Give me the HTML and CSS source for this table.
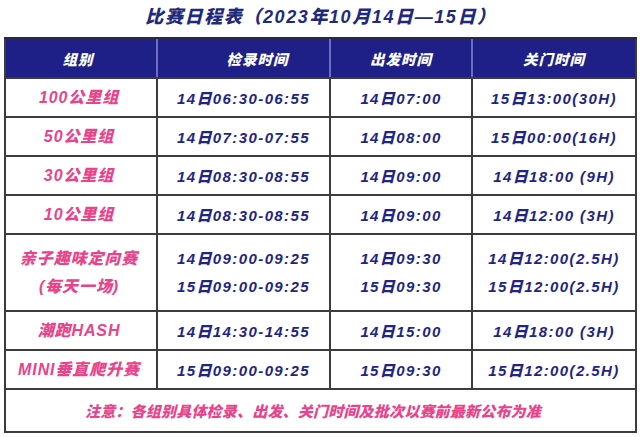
FILE: index.html
```html
<!DOCTYPE html>
<html lang="zh-CN">
<head>
<meta charset="utf-8">
<link rel="stylesheet" href="styles.css">
</head>
<body>
<div class="title">比赛日程表（2023年10月14日—15日）</div>
<table class="sched">
  <colgroup>
    <col class="c1"><col class="c2"><col class="c3"><col class="c4">
  </colgroup>
  <thead>
    <tr><th>组别</th><th class="shift">检录时间</th><th>出发时间</th><th>关门时间</th></tr>
  </thead>
  <tbody>
    <tr><td class="grp">100公里组</td><td>14日06:30-06:55</td><td>14日07:00</td><td>15日13:00(30H)</td></tr>
    <tr><td class="grp">50公里组</td><td>14日07:30-07:55</td><td>14日08:00</td><td>15日00:00(16H)</td></tr>
    <tr><td class="grp">30公里组</td><td>14日08:30-08:55</td><td>14日09:00</td><td>14日18:00 (9H)</td></tr>
    <tr><td class="grp">10公里组</td><td>14日08:30-08:55</td><td>14日09:00</td><td>14日12:00 (3H)</td></tr>
    <tr class="tall">
      <td class="grp">亲子趣味定向赛<br>(每天一场)</td>
      <td><div class="ln">14日09:00-09:25</div><div class="ln">15日09:00-09:25</div></td>
      <td><div class="ln">14日09:30</div><div class="ln">15日09:30</div></td>
      <td><div class="ln">14日12:00(2.5H)</div><div class="ln">15日12:00(2.5H)</div></td>
    </tr>
    <tr><td class="grp">潮跑HASH</td><td>14日14:30-14:55</td><td>14日15:00</td><td>14日18:00 (3H)</td></tr>
    <tr><td class="grp">MINI垂直爬升赛</td><td>15日09:00-09:25</td><td>15日09:30</td><td>15日12:00(2.5H)</td></tr>
    <tr class="note"><td colspan="4">注意：各组别具体检录、出发、关门时间及批次以赛前最新公布为准</td></tr>
  </tbody>
</table>
</body>
</html>
```
FILE: styles.css
```css
html, body {
  margin: 0;
  padding: 0;
  background: #ffffff;
}
body {
  width: 640px;
  height: 437px;
  overflow: hidden;
  font-family: "Liberation Sans", "Noto Sans CJK SC", sans-serif;
  font-weight: 900;
  font-style: italic;
}
.title {
  height: 37px;
  line-height: 34px;
  text-align: center;
  font-size: 18px;
  color: #1f2a7c;
  letter-spacing: 1.6px;
  padding-left: 2px;
}
.sched {
  margin-left: 4px;
  width: 631px;
  border-collapse: collapse;
  table-layout: fixed;
  border: 2px solid #3c3c3c;
}
.c1 { width: 152px; }
.c2 { width: 173px; }
.c3 { width: 142px; }
.c4 { width: 164px; }
.sched th {
  background: #1e1f87;
  color: #ffffff;
  height: 38px;
  padding: 0;
  font-size: 14.5px;
  font-weight: 900;
  letter-spacing: 1px;
  border-left: 2px solid #6d6ec2;
  border-bottom: 2px solid #3c3c3c;
  border-top: 2px solid #2a2a3a;
}
.sched th:first-child {
  border-left: 2px solid #3c3c3c;
  padding-right: 6px;
}
.sched th.shift { padding-left: 28px; }
.sched td {
  height: 37px;
  padding: 0;
  text-align: center;
  border: 2px solid #3c3c3c;
  color: #1e2585;
  font-size: 15px;
  letter-spacing: 1.4px;
}
.sched td.grp {
  color: #e8438b;
  font-size: 16px;
  letter-spacing: 0.9px;
  line-height: 28px;
  padding-right: 4px;
}
.sched tr.tall td { height: 75px; }
.ln { line-height: 28px; }
.sched tr.note td {
  height: 41px;
  color: #e8438b;
  font-size: 15px;
  letter-spacing: 0.2px;
  padding-right: 15px;
}
```
